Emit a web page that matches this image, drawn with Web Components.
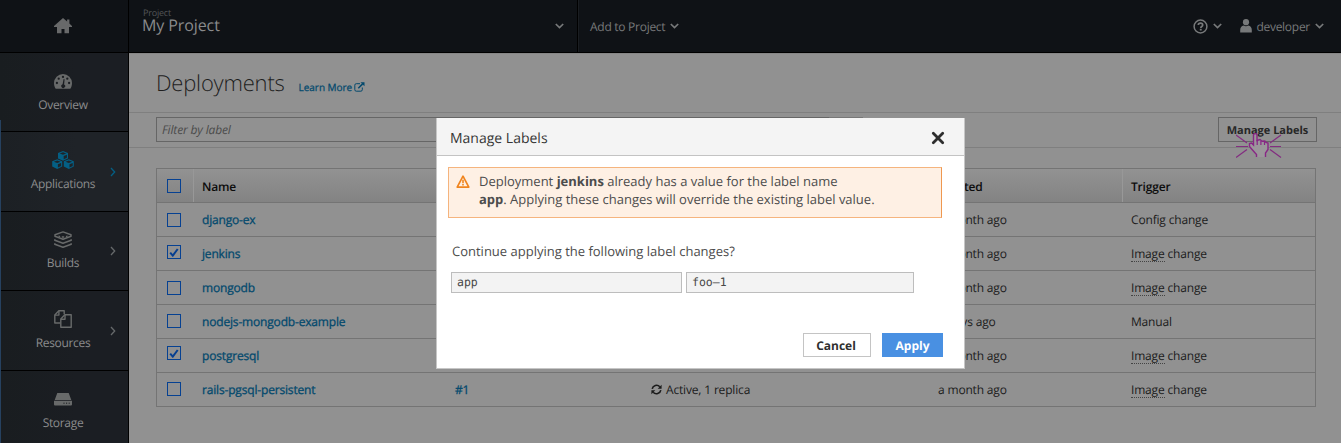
<!DOCTYPE html>
<html lang="en">
<head>
<meta charset="utf-8">
<title>Deployments</title>
<style>
  html, body { margin: 0; height: 100%; overflow: hidden; background: #fff; }
  body { font-family: "Open Sans", "Noto Sans", sans-serif; font-size: 12px; color: #1b1b1b; text-rendering: geometricPrecision; }
</style>
</head>
<body>
<console-page></console-page>
<script>
const define = (name, html, setup) => {
  const tpl = document.createElement('template');
  tpl.innerHTML = html;
  customElements.define(name, class extends HTMLElement {
    constructor() {
      super();
      this.attachShadow({ mode: 'open' });
    }
    connectedCallback() {
      if (this.shadowRoot.childNodes.length) return;
      this.shadowRoot.append(tpl.content.cloneNode(true));
      if (setup) setup(this, this.shadowRoot);
    }
  });
};

/* name: [width, height, markup] */
const ICONS = {
  home: [18, 16, '<path fill="currentColor" d="M9 0 0 8v1h3v6.2h4.500V11h3v4.200H15V9h3V8l-2.600-2.400V1.400h-2.300v2.200z"/>'],
  gauge: [18, 15, '<path fill="currentColor" d="M9 0a9 9 0 0 0-9 9c0 2.200.5 4.200 1.700 5.700h14.600C17.500 13.200 18 11.200 18 9a9 9 0 0 0-9-9z"/><g fill="#1b1e22"><circle cx="9" cy="2.900" r="1.150"/><circle cx="4.700" cy="4.700" r="1.150"/><circle cx="13.300" cy="4.700" r="1.150"/><circle cx="2.900" cy="9" r="1.150"/><circle cx="15.100" cy="9" r="1.150"/><path d="M9.600 5l1 .2-.5 5.200a1.900 1.900 0 1 1-1.500-.1z"/></g>'],
  cubes: [22, 18, '<g fill="currentColor"><path d="M11 0l5 2v5.400l-5 2.300-5-2.300V2z"/><path d="M5.200 8.200l5 2.100v5.300l-5 2.300-5-2.300v-5.300z"/><path d="M16.800 8.200l5 2.100v5.300l-5 2.300-5-2.300v-5.300z"/></g><g fill="#1f2328"><path d="M7.700 2.500L11 1.200l3.300 1.300L11 3.800zM11.700 5.100l3.200-1.300v3l-3.200 1.500z"/><path d="M1.900 10.700l3.300-1.300 3.300 1.300L5.200 12zM5.900 13.300L9.100 12v3l-3.200 1.500z"/><path d="M13.500 10.700l3.300-1.300 3.300 1.300-3.300 1.300zM17.500 13.300l3.200-1.300v3l-3.200 1.500z"/></g>'],
  layers: [18, 17, '<g fill="none" stroke="currentColor" stroke-width="1.500" stroke-linejoin="round"><path d="M9 .9L1 3.700v1.500l8 3 8-3V3.700z"/><path d="M.8 8.300v1l8.200 3 8.200-3v-1"/><path d="M.8 12.200v1l8.200 3 8.200-3v-1"/></g><path d="M4.500 5l1.600.6M7.800 6h2.400M12 5.600l1.600-.6" stroke="currentColor" stroke-width="1.300"/>'],
  files: [18, 18, '<g fill="none" stroke="currentColor" stroke-width="1.400" stroke-linejoin="round"><path d="M6.500 13H.8V5l4-4.200h5.400v3.500"/><path d="M4.900.9v4.200H.9"/><path d="M10.800 4.800h6.400v12.400H6.800V9z"/><path d="M11 4.900v4.300H6.900"/></g>'],
  disk: [18, 13, '<path fill="currentColor" d="M3.300 0h11.400l2.600 7H.7zM0 7.800h18v3.700q0 1-1 1H1q-1 0-1-1z"/><g fill="#1b1e22"><circle cx="10" cy="10.200" r=".6"/><circle cx="12.600" cy="10.200" r=".6"/><circle cx="15.200" cy="10.200" r=".6"/></g>'],
  right: [6, 10, '<path d="M1 1l3.700 4L1 9" fill="none" stroke="currentColor" stroke-width="1.300"/>'],
  down: [9, 6, '<path d="M.8 1l3.700 3.600L8.200 1" fill="none" stroke="currentColor" stroke-width="1.700"/>'],
  help: [15, 15, '<circle cx="7.500" cy="7.500" r="6.400" fill="none" stroke="currentColor" stroke-width="1.500"/><path d="M5.300 6.100c0-1.300.9-2 2.200-2s2.200.8 2.200 1.900c0 1.500-1.900 1.500-1.900 2.900" fill="none" stroke="currentColor" stroke-width="1.700"/><rect x="6.800" y="9.800" width="1.900" height="1.700" fill="currentColor"/>'],
  user: [12, 14, '<circle cx="6" cy="3.200" r="3.100" fill="currentColor"/><path fill="currentColor" d="M.2 13.600V11c0-2.300 1.300-4.200 3.400-4.400q2.400 1.300 4.800 0c2.100.2 3.400 2.100 3.400 4.400v2.600z"/>'],
  external: [11, 10, '<path d="M6 1.700H2.300Q.8 1.700.8 3.200v4.500Q.8 9.200 2.300 9.200h4.500Q8.300 9.200 8.300 7.700V5.500" fill="none" stroke="currentColor" stroke-width="1"/><path d="M4.300 6.200l4.300-4.300" stroke="currentColor" stroke-width="1.500"/><path d="M6.500.2h4v4z" fill="currentColor"/>'],
  sync: [11, 11, '<path d="M1.200 4.900A4.400 4.400 0 0 1 8.800 2.700M9.800 6.100A4.400 4.400 0 0 1 2.200 8.300" fill="none" stroke="currentColor" stroke-width="1.600"/><path fill="currentColor" d="M10.600.7v4H6.700zM.4 10.300v-4h3.900z"/>'],
  warn: [14, 13, '<path d="M7 1.200l5.800 10.900H1.200z" fill="none" stroke="currentColor" stroke-width="1.700" stroke-linejoin="round"/><path d="M7 4.700v3.500M7 9.100v1.500" stroke="currentColor" stroke-width="1.600"/>'],
  close: [14, 14, '<path d="M2.300 2.300l9.400 9.400M11.700 2.300l-9.400 9.400" stroke="currentColor" stroke-width="2.800" stroke-linecap="round"/>'],
  tick: [10, 9, '<path d="M1.200 4.600l2.600 3L8.700 1" fill="none" stroke="currentColor" stroke-width="2"/>'],
  click: [46, 26, '<path d="M0 2l11 8M0 13.500h12M0 24.500l11-8M45 2l-11 8M45 13.500H34M45 24.500l-11-8" stroke="#832c80" stroke-width="1.200" fill="none"/><path d="M20.500 24v-2.500L16.500 17l-3-3.500v-3l2-.5 2 2V1.500q1.800-1.800 3.500 0v6L24 6.500l2 1.700 2.800-.2L30 9.500l2 .5v6.500L29.500 20v4z" fill="#9b979b"/><path d="M20.500 24v-2.500L16.500 17l-3-3.500v-3l2-.5 2 2V1.500q1.800-1.800 3.500 0v6L24 6.500l2 1.700 2.800-.2L30 9.500l2 .5v6.500L29.500 20v4" fill="none" stroke="#882785" stroke-width="1.400"/><path d="M21.200 7v5M24.900 8v4M28.500 9v3" stroke="#882785" stroke-width="1.200"/>']
};
define('ui-icon', `<style>:host{display:inline-flex;flex:none}svg{display:block}</style>`, (el, root) => {
  const [w, h, body] = ICONS[el.getAttribute('name')];
  root.innerHTML += `<svg width="${w}" height="${h}" viewBox="0 0 ${w} ${h}">${body}</svg>`;
});

define('nav-item', `<style>
  :host{display:grid;grid-template-columns:30px 66px 30px;padding-right:2px;box-sizing:border-box;height:var(--h,79px);border-bottom:1px solid #000;
    background:linear-gradient(90deg,#191d20,#1b1e23 60%);color:#8b8c8d;flex:none}
  :host([active]){background:linear-gradient(90deg,#1c2024,#1f2328 60%)}
  .main{grid-column:2;display:flex;flex-direction:column;align-items:center}
  .pic{height:22px;margin-top:var(--top,17px);display:flex;align-items:center;color:#686a6a}
  :host([active]) .pic,:host([active]) .arrow{color:#045f84}
  .label{line-height:16px;margin-top:5px;white-space:nowrap;letter-spacing:-.32px}
  .arrow{display:flex;align-items:center;justify-content:center;padding:0 0 0 4px;color:#66696b}
</style><div class="main"><span class="pic"></span><span class="label"><slot></slot></span></div><div class="arrow"></div>`, (el, root) => {
  root.querySelector('.pic').innerHTML = `<ui-icon name="${el.getAttribute('icon')}"></ui-icon>`;
  if (el.hasAttribute('more')) root.querySelector('.arrow').innerHTML = '<ui-icon name="right"></ui-icon>';
});

define('side-nav', `<style>
  :host{display:flex;flex-direction:column;width:128px;border-right:1px solid #000;position:relative;overflow:hidden;background:#1b1e23}
  .strip{position:absolute;left:0;top:67px;bottom:0;width:1px;background:#26415f}
</style>
<nav-item icon="gauge" style="--top:17px;--h:79px">Overview</nav-item>
<nav-item icon="cubes" active more style="--h:80px">Applications</nav-item>
<nav-item icon="layers" more style="--top:16px">Builds</nav-item>
<nav-item icon="files" more style="--h:80px">Resources</nav-item>
<nav-item icon="disk" style="--top:17px">Storage</nav-item>
<div class="strip"></div>`);

define('top-bar', `<style>
  :host{display:flex;height:52px;border-bottom:1px solid #000;background:#0f1216;color:#77797a;flex:none;letter-spacing:-.27px}
  div{display:flex;align-items:center;box-sizing:border-box}
  .home{width:129px;justify-content:center;padding-right:2px;border-right:1px solid #000;color:#68696a}
  .project{width:449px;border-right:1px solid #000;justify-content:space-between;padding:0 13px 0 14px}
  .names{flex-direction:column;align-items:flex-start;align-self:flex-start;padding-top:7px}
  small{font-size:9px;line-height:12px;color:#535557;letter-spacing:-.2px}
  b{font-weight:400;font-size:16px;line-height:13px;color:#898a8b;letter-spacing:-.1px;margin-left:-1px}
  .add{padding-left:11px;gap:5px;flex:1;border-left:1px solid #1a1d21}
  .user{padding-right:17px}
</style>
<div class="home"><ui-icon name="home"></ui-icon></div>
<div class="project"><div class="names"><small>Project</small><b>My Project</b></div><ui-icon name="down"></ui-icon></div>
<div class="add"><span>Add to Project</span><ui-icon name="down"></ui-icon></div>
<div class="user"><ui-icon name="help"></ui-icon><ui-icon name="down" style="margin:0 18px 0 5px"></ui-icon><ui-icon name="user"></ui-icon><span style="margin:0 5px 0 4px">developer</span><ui-icon name="down"></ui-icon></div>`);

define('page-title', `<style>
  :host{display:flex;align-items:baseline;box-sizing:border-box;height:60px;border-bottom:1px solid #7f7f7f;padding:13px 0 0 27px;border-top:1px solid #868686}
  h1{margin:0;font-weight:300;font-size:22px;line-height:32px;color:#1e1e1e;letter-spacing:-.2px}
  a{font-size:10px;color:#03496d;margin-left:14px;-webkit-text-stroke:.25px;letter-spacing:-.05px}
  ui-icon{margin-left:2px;vertical-align:-1px}
</style><h1><slot></slot></h1><a>Learn More<ui-icon name="external"></ui-icon></a>`);

define('tool-bar', `<style>
  :host{display:flex;box-sizing:border-box;height:35px;border-bottom:1px solid #7f7f7f;padding:4px 24px 0 27px;position:relative}
  .filter{box-sizing:border-box;width:673px;height:25px;border:1px solid #666;padding:0 5px;line-height:24px;font-style:italic;color:#4b4b4b;letter-spacing:-.15px}
  .addon{box-sizing:border-box;width:34px;height:25px;border:1px solid #777;border-left:0}
  .btn{box-sizing:border-box;height:25px;width:99px;border:1px solid #666;margin-left:auto;font-weight:700;font-size:11px;line-height:25px;text-align:center;color:#272727;white-space:nowrap}
  .click{position:absolute;left:1107px;top:20px}
</style><div class="filter">Filter by label</div><div class="addon"></div><div class="btn">Manage Labels</div><ui-icon class="click" name="click"></ui-icon>`);

define('check-box', `<style>
  :host{display:flex;box-sizing:border-box;width:14px;height:14px;border:1px solid #064192;align-items:center;justify-content:center;color:#063f91}
</style>`, (el, root) => { if (el.hasAttribute('checked')) root.innerHTML += '<ui-icon name="tick"></ui-icon>'; });

define('table-row', `<style>
  :host{display:grid;grid-template-columns:36px 253px 196px 287px 193px 1fr;box-sizing:border-box;height:34px;border-bottom:1px solid #747474;line-height:33px;letter-spacing:-.17px}
  :host([head]){font-weight:600;color:#0c0c0c;background:linear-gradient(#929292,#838383);line-height:35px}
  :host([head]) span+span{border-left:1px solid #989898;padding-left:8px}
  span{padding-left:9px;white-space:nowrap;height:33px}
  .check{padding:var(--check,10px) 0 0 10px;height:auto}
  .link ::slotted(a){color:#03496d;-webkit-text-stroke:.3px}
</style>
<span class="check"></span><span class="link"><slot name="name"></slot></span><span class="link"><slot name="latest"></slot></span><span><slot name="status"></slot></span><span><slot name="created"></slot></span><span><slot name="trigger"></slot></span>`, (el, root) => {
  root.querySelector('.check').innerHTML = `<check-box ${el.hasAttribute('checked') ? 'checked' : ''}></check-box>`;
});

define('deploy-table', `<style>
  :host{display:block;margin:20px 25px 0 27px;border:1px solid #747474;border-bottom:0}
  i{font-style:normal}
  abbr{display:inline-block;line-height:14px;border-bottom:1px dotted #444;text-decoration:none}
  ui-icon{vertical-align:-1px;margin-right:4px}
</style><div></div>`, (el, root) => {
  const image = '<abbr>Image</abbr> change';
  const rows = [
    ['django-ex', 'a month ago', 'Config change', 10],
    ['jenkins', 'a month ago', image, 8, 1],
    ['mongodb', 'a month ago', image, 10],
    ['nodejs-mongodb-example', '7 days ago', 'Manual', 9],
    ['postgresql', 'a month ago', image, 7, 1],
    ['rails-pgsql-persistent', 'a month ago', image, 9]
  ];
  root.querySelector('div').innerHTML =
    `<table-row head><i slot="name">Name</i><i slot="created">Created</i><i slot="trigger">Trigger</i></table-row>` +
    rows.map(([n, c, t, p, k], i) => `<table-row ${k ? 'checked' : ''} style="--check:${p}px"><a slot="name">${n}</a>` +
      (i === 5 ? '<a slot="latest">#1</a><i slot="status"><ui-icon name="sync"></ui-icon>Active, 1 replica</i>' : '') +
      `<i slot="created">${c}</i><i slot="trigger">${t}</i></table-row>`).join('');
});

define('warning-box', `<style>
  :host{display:flex;box-sizing:border-box;width:494px;height:51px;margin:11px 0 0 11px;border:1px solid #f5b47e;border-right-color:#ef9850;background:#fef0e4;padding:4px 0 0 7px;font-size:13px;line-height:18px;color:#4c4c4c}
  ui-icon{color:#f0851f;margin:3px 9px 0 0}
</style><ui-icon name="warn"></ui-icon><div><slot></slot></div>`);

define('label-dialog', `<style>
  :host{display:flex;flex-direction:column;box-sizing:border-box;position:absolute;left:436px;top:118px;width:529px;height:251px;background:#fff;border:1px solid #c6c6c6;border-top:0}
  header{display:flex;justify-content:space-between;align-items:center;box-sizing:border-box;height:38px;background:#f4f4f4;border-bottom:1px solid #c3c3c3;padding:2px 19px 0 13px;font-size:14px;color:#363636}
  header span{padding-top:2px}
  header ui-icon{color:#2d2d2d}
  p{margin:23px 0 0 15px;font-size:13px;line-height:20px;color:#4c4c4c}
  .fields{display:flex;gap:4px;margin:11px 0 0 14px}
  .fields div{box-sizing:border-box;width:231px;height:21px;border:1px solid #bdbdbd;background:#f3f3f3;padding-left:5px;line-height:19px;font-family:"DejaVu Sans Mono",monospace;font-size:11.5px;color:#484848}
  .fields div+div{width:228px}
  footer{display:flex;justify-content:flex-end;gap:11px;margin:40px 21px 0 0;font-size:12px}
  footer div{box-sizing:border-box;width:68px;height:24px;line-height:23px;border:1px solid #c4c4c4;text-align:center;color:#2f2f2f;font-weight:700;padding-right:2px}
  footer div+div{width:61px;background:#4990e2;border-color:#4990e2;color:#fff;padding:0}
</style>
<header><span>Manage Labels</span><ui-icon name="close"></ui-icon></header>
<warning-box>Deployment <b>jenkins</b> already has a value for the label name<br><b>app</b>. Applying these changes will override the existing label value.</warning-box>
<p>Continue applying the following label changes?</p>
<div class="fields"><div>app</div><div>foo–1</div></div>
<footer><div>Cancel</div><div>Apply</div></footer>`);

define('console-page', `<style>
  :host{display:flex;flex-direction:column;width:1341px;height:443px;background:#919191;position:relative;overflow:hidden}
  .body{display:flex;flex:1;min-height:0}
  main{flex:1;min-width:0}
</style>
<top-bar></top-bar>
<div class="body"><side-nav></side-nav><main><page-title>Deployments</page-title><tool-bar></tool-bar><deploy-table></deploy-table></main></div>
<label-dialog></label-dialog>`);
</script>
</body>
</html>
